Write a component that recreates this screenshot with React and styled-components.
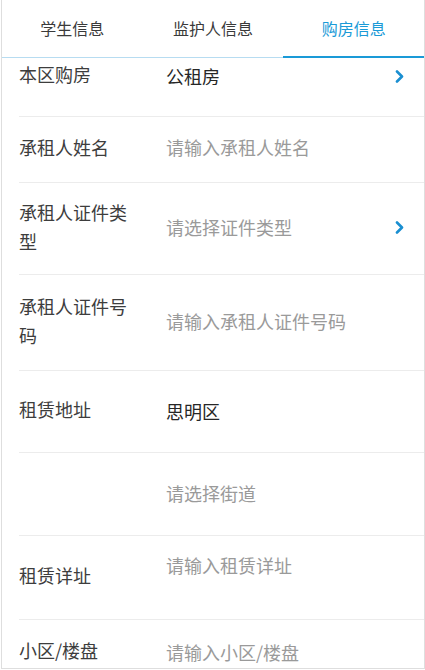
import React, { useState } from "react";
import styled, { createGlobalStyle } from "styled-components";

const GlobalStyle = createGlobalStyle`
	html, body {
		margin: 0;
		padding: 0;
		background: #fff;
	}
	body {
		font-family: "Noto Sans CJK SC", "Noto Sans", sans-serif;
	}
`;

// --- Styled Components ---
const Page = styled.div`
	margin-left: 1px;
	width: 424px;
	height: 669px;
	box-sizing: border-box;
	border: 1px solid #dedede;
	border-top: none;
	overflow: hidden;
	background: #fff;
`;

const TabBar = styled.div`
	display: grid;
	grid-template-columns: repeat(3, 1fr);
	height: 58px;
	box-sizing: border-box;
	border-bottom: 1px solid #b7dcf1;
`;

const Tab = styled.div`
	display: flex;
	align-items: center;
	justify-content: center;
	font-size: 16px;
	color: ${({ $active }) => ($active ? "#1a9ad7" : "#3a3a3a")};
	box-shadow: ${({ $active }) => ($active ? "inset 0 -2px 0 #1a9ad7" : "none")};
	margin-bottom: -1px;
	padding-bottom: 3px;
	cursor: pointer;
`;

const List = styled.div`
	display: flex;
	flex-direction: column;
`;

const Row = styled.div`
	display: flex;
	align-items: center;
	height: ${({ $h }) => $h}px;
	box-sizing: border-box;
	margin-left: 17px;
	padding-bottom: ${({ $lift }) => $lift ?? 4}px;
	border-bottom: 1px solid #ececec;
	flex-shrink: 0;
`;

const Label = styled.div`
	width: 147px;
	flex-shrink: 0;
	padding-right: 30px;
	box-sizing: border-box;
	font-size: 18px;
	line-height: 29px;
	color: #3d3d3d;
`;

const Value = styled.div`
	flex: 1;
	font-size: 18px;
	line-height: 29px;
	color: ${({ $empty }) => ($empty ? "#9a9a9a" : "#262626")};
	align-self: ${({ $top }) => ($top ? "flex-start" : "center")};
	padding-top: ${({ $top }) => $top || 0}px;
	margin-top: ${({ $nudge }) => $nudge || 0}px;
`;

const Arrow = styled.div`
	width: 14px;
	margin-right: 18px;
	display: flex;
	justify-content: center;
	margin-top: ${({ $nudge }) => $nudge || 0}px;
`;

const Chevron = () => (
	<svg width="9" height="13" viewBox="0 0 9 13">
		<polyline
			points="2,1.5 7,6.5 2,11.5"
			fill="none"
			stroke="#1a8fd1"
			strokeWidth="2.6"
			strokeLinecap="round"
			strokeLinejoin="round"
		/>
	</svg>
);

const tabs = ["学生信息", "监护人信息", "购房信息"];

const rows = [
	{ h: 59, lift: 25, label: "本区购房", value: "公租房", arrow: true, nudge: 3 },
	{ h: 66, label: "承租人姓名", placeholder: "请输入承租人姓名" },
	{ h: 92, label: "承租人证件类型", placeholder: "请选择证件类型", arrow: true, nudge: 2 },
	{ h: 96, label: "承租人证件号码", placeholder: "请输入承租人证件号码", nudge: 2 },
	{ h: 82, label: "租赁地址", value: "思明区", nudge: 3 },
	{ h: 83, label: "", placeholder: "请选择街道", nudge: 2 },
	{ h: 84, label: "租赁详址", placeholder: "请输入租赁详址", top: 15 },
	{ h: 66, label: "小区/楼盘", placeholder: "请输入小区/楼盘", nudge: 3 },
];

const App = () => {
	const [active, setActive] = useState(2);

	return (
		<>
			<GlobalStyle />
			<Page>
				<TabBar>
					{tabs.map((t, i) => (
						<Tab key={t} $active={i === active} onClick={() => setActive(i)}>
							{t}
						</Tab>
					))}
				</TabBar>
				<List>
					{rows.map((r, i) => (
						<Row key={i} $h={r.h} $lift={r.lift}>
							<Label>{r.label}</Label>
							<Value $empty={!r.value} $top={r.top} $nudge={r.nudge}>
								{r.value || r.placeholder}
							</Value>
							{r.arrow && (
								<Arrow $nudge={r.nudge}>
									<Chevron />
								</Arrow>
							)}
						</Row>
					))}
				</List>
			</Page>
		</>
	);
};

export default App;
